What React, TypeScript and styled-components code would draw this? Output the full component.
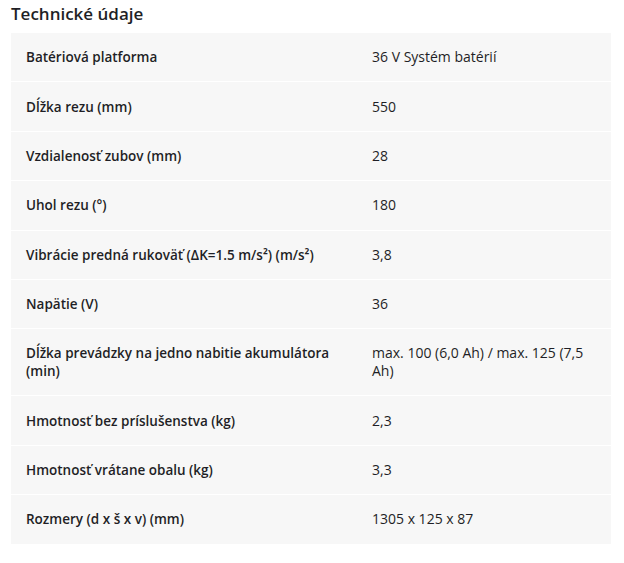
import React from "react";
import styled, { createGlobalStyle } from "styled-components";

const Global = createGlobalStyle`
  html, body { margin: 0; padding: 0; background: #ffffff; }
  body { font-family: "Open Sans", "Noto Sans", sans-serif; color: #1f1f26; }
`;

const Page = styled.div`
  padding: 3px 13px 0 11px;
  width: 600px;
`;

const Title = styled.h2`
  margin: 0 0 8px 0;
  font-size: 17px;
  line-height: 22px;
  font-weight: 600;
  color: #1f1f26;
`;

const Table = styled.div`
  display: flex;
  flex-direction: column;
  gap: 1px;
  background: #ffffff;
`;

const Row = styled.div`
  display: grid;
  grid-template-columns: 346px 1fr;
  background: #f7f7f7;
  min-height: 48.4px;
  align-items: center;
`;

const Cell = styled.div<{ $label?: boolean }>`
  padding: 15px 15px;
  font-size: ${(p) => (p.$label ? "13.5px" : "14px")};
  line-height: 18px;
  font-weight: ${(p) => (p.$label ? 600 : 400)};
  color: #1f1f26;
`;

const rows: [string, string][] = [
  ["Batériová platforma", "36 V Systém batérií"],
  ["Dĺžka rezu (mm)", "550"],
  ["Vzdialenosť zubov (mm)", "28"],
  ["Uhol rezu (°)", "180"],
  ["Vibrácie predná rukoväť (ΔK=1.5 m/s²) (m/s²)", "3,8"],
  ["Napätie (V)", "36"],
  ["Dĺžka prevádzky na jedno nabitie akumulátora (min)", "max. 100 (6,0 Ah) / max. 125 (7,5 Ah)"],
  ["Hmotnosť bez príslušenstva (kg)", "2,3"],
  ["Hmotnosť vrátane obalu (kg)", "3,3"],
  ["Rozmery (d x š x v) (mm)", "1305 x 125 x 87"],
];

export default function App() {
  return (
    <>
      <Global />
      <Page>
        <Title>Technické údaje</Title>
        <Table>
          {rows.map(([k, v], i) => (
            <Row key={i}>
              <Cell $label>{k}</Cell>
              <Cell>{v}</Cell>
            </Row>
          ))}
        </Table>
      </Page>
    </>
  );
}
